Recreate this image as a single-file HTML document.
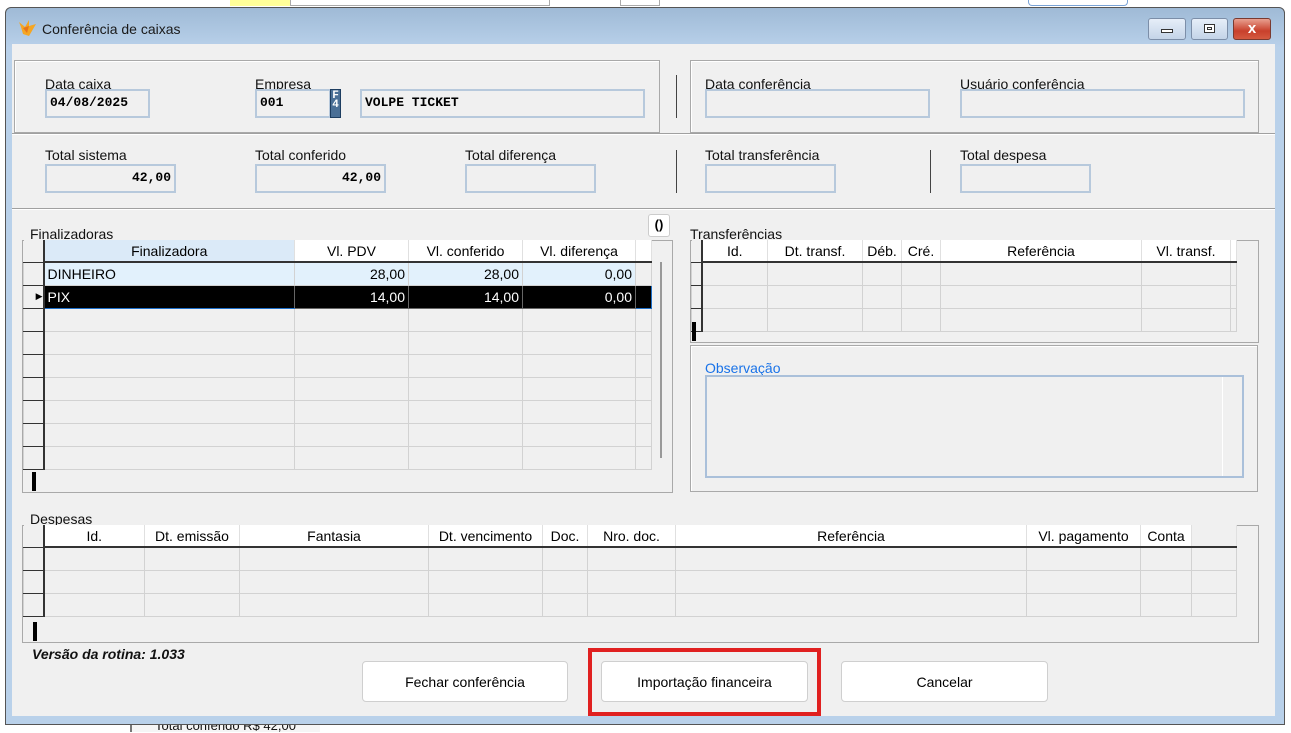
<!DOCTYPE html>
<html><head><meta charset="utf-8">
<style>
*{box-sizing:border-box;margin:0;padding:0}
body{width:1291px;height:732px;overflow:hidden;background:#fff;font-family:"Liberation Sans",sans-serif;font-size:14px;color:#000;position:relative}
.a{position:absolute}
.lbl{position:absolute;font-size:14px;color:#111;white-space:nowrap}
.inp{position:absolute;background:#f0f0f0;border:2px solid #b7c9dc;font-family:"Liberation Mono",monospace;font-weight:bold;font-size:13px;padding:2px 3px;line-height:20px}
.grp{position:absolute;border:1px solid #a9a9a9;box-shadow:inset 1px 1px 0 #fff}
.hl{position:absolute;height:2px;background:#a0a0a0;border-bottom:1px solid #fff}
.vl{position:absolute;width:2px;background:#555}
table{border-collapse:collapse;table-layout:fixed;position:absolute}
td{border:1px solid #d2d2d2;height:23px;padding:0 3px;font-size:14px;white-space:nowrap;overflow:hidden}
th{font-weight:normal;background:#fff;height:22px;border-right:1px solid #e0e0e0;border-bottom:2px solid #333;font-size:14px;white-space:nowrap;overflow:hidden}
td.ind,th.ind{background:#f0f0f0;border-right:2px solid #333;border-bottom:1px solid #333;padding:0}
.r{text-align:right}
.btn{position:absolute;background:#fff;border:1px solid #cfcfcf;border-radius:4px;text-align:center;line-height:40px;font-size:14px}
</style></head><body>
<div class="a" style="left:230px;top:0;width:60px;height:6px;background:#ffff99"></div>
<div class="a" style="left:290px;top:0;width:260px;height:6px;border:1px solid #aaa;border-top:0"></div>
<div class="a" style="left:620px;top:0;width:40px;height:6px;border:1px solid #aaa;border-top:0"></div>
<div class="a" style="left:1028px;top:0;width:100px;height:6px;border:1px solid #7aa3d6;border-top:0;border-radius:0 0 4px 4px"></div>
<div class="a" style="left:130px;top:722px;width:190px;height:10px;background:#f5f5f5;border-left:2px solid #777"></div>
<div class="lbl" style="left:155px;top:718px;font-size:13px">Total conferido R$ 42,00</div>
<div class="a" style="left:5px;top:7px;width:1280px;height:718px;border:1px solid #555;border-radius:6px 6px 0 0;background:linear-gradient(#9fbad6,#b9d1ea 40px,#b9d1ea)"></div>
<svg class="a" style="left:17px;top:18px" width="22" height="20" viewBox="0 0 22 20"><path d="M2 4 L8 9 L12 2 L12 8 L19 6 L12 18 L6 16 L4 9Z" fill="#f5a623"/><path d="M6 10 L12 8 L10 15Z" fill="#e8751a"/></svg>
<div class="lbl" style="left:42px;top:21px;font-size:14px;color:#1a1a1a">Conferência de caixas</div>
<div class="a" style="left:1148px;top:18px;width:38px;height:22px;border:1px solid #7c8ea8;border-radius:3px;background:linear-gradient(#e6eef8,#c4d4e8)"></div>
<div class="a" style="left:1161px;top:29px;width:12px;height:4px;border:1px solid #333;background:#fff"></div>
<div class="a" style="left:1191px;top:18px;width:37px;height:22px;border:1px solid #7c8ea8;border-radius:3px;background:linear-gradient(#e6eef8,#c4d4e8)"></div>
<div class="a" style="left:1204px;top:24px;width:11px;height:9px;border:1px solid #333;background:#fff;box-shadow:inset 0 0 0 2px #fff,inset 0 0 0 3px #333"></div>
<div class="a" style="left:1233px;top:18px;width:38px;height:22px;border:1px solid #7a3a30;border-radius:3px;background:linear-gradient(#e8a090,#c8402c 60%,#d45a40);color:#fff;font-weight:bold;text-align:center;line-height:20px;font-size:15px">x</div>
<div class="a" style="left:12px;top:44px;width:1263px;height:672px;background:#f0f0f0"></div>

<div class="grp" style="left:14px;top:60px;width:646px;height:73px"></div>
<div class="lbl" style="left:45px;top:76px">Data caixa</div>
<div class="inp" style="left:45px;top:89px;width:105px;height:29px">04/08/2025</div>
<div class="lbl" style="left:255px;top:76px">Empresa</div>
<div class="inp" style="left:255px;top:89px;width:76px;height:29px">001</div>
<div class="a" style="left:330px;top:89px;width:11px;height:29px;background:#4a6f96;border:1px solid #1d3d60;color:#fff;font-family:'Liberation Mono',monospace;font-size:11px;font-weight:bold;line-height:9px;text-align:center;padding-top:2px">F<br>4</div>
<div class="inp" style="left:360px;top:89px;width:285px;height:29px">VOLPE TICKET</div>
<div class="vl" style="left:676px;top:75px;height:43px;width:1px;background:#444"></div>
<div class="grp" style="left:690px;top:60px;width:569px;height:73px"></div>
<div class="lbl" style="left:705px;top:76px">Data conferência</div>
<div class="inp" style="left:705px;top:89px;width:225px;height:29px"></div>
<div class="lbl" style="left:960px;top:76px">Usuário conferência</div>
<div class="inp" style="left:960px;top:89px;width:285px;height:29px"></div>
<div class="hl" style="left:12px;top:133px;width:1263px"></div>

<div class="lbl" style="left:45px;top:147px">Total sistema</div>
<div class="inp r" style="left:45px;top:164px;width:131px;height:29px">42,00</div>
<div class="lbl" style="left:255px;top:147px">Total conferido</div>
<div class="inp r" style="left:255px;top:164px;width:131px;height:29px">42,00</div>
<div class="lbl" style="left:465px;top:147px">Total diferença</div>
<div class="inp" style="left:465px;top:164px;width:131px;height:29px"></div>
<div class="vl" style="left:676px;top:150px;height:43px;width:1px;background:#444"></div>
<div class="lbl" style="left:705px;top:147px">Total transferência</div>
<div class="inp" style="left:705px;top:164px;width:131px;height:29px"></div>
<div class="vl" style="left:930px;top:150px;height:43px;width:1px;background:#444"></div>
<div class="lbl" style="left:960px;top:147px">Total despesa</div>
<div class="inp" style="left:960px;top:164px;width:131px;height:29px"></div>
<div class="hl" style="left:12px;top:208px;width:1263px"></div>

<div class="lbl" style="left:30px;top:226px">Finalizadoras</div>
<div class="a" style="left:648px;top:214px;width:22px;height:23px;background:#fff;border:1px solid #ccc;border-radius:3px;text-align:center;font-weight:bold;font-size:13px;line-height:20px">()</div>
<div class="a" style="left:22px;top:240px;width:651px;height:253px;border:1px solid #a9a9a9;background:#f0f0f0"></div>
<table style="left:23px;top:240px;width:628px">
<colgroup><col style="width:20px"><col style="width:251px"><col style="width:114px"><col style="width:114px"><col style="width:113px"><col style="width:16px"></colgroup>
<tr><th class="ind"></th><th style="background:#dbeaf8">Finalizadora</th><th>Vl. PDV</th><th>Vl. conferido</th><th>Vl. diferença</th><th style="border-bottom:2px solid #333"></th></tr>
<tr style="background:#e2f1fc"><td class="ind"></td><td>DINHEIRO</td><td class="r">28,00</td><td class="r">28,00</td><td class="r">0,00</td><td style="background:#f0f0f0"></td></tr>
<tr style="background:#000;color:#fff"><td class="ind" style="font-size:9px;color:#000;text-align:right">▶</td><td style="border:1px solid #1e6fc8;border-right:1px solid #666">PIX</td><td class="r" style="border-color:#666">14,00</td><td class="r" style="border-color:#666">14,00</td><td class="r" style="border-color:#666">0,00</td><td style="border-color:#1e6fc8"></td></tr>
<tr><td class="ind"></td><td></td><td></td><td></td><td></td><td></td></tr>
<tr><td class="ind"></td><td></td><td></td><td></td><td></td><td></td></tr>
<tr><td class="ind"></td><td></td><td></td><td></td><td></td><td></td></tr>
<tr><td class="ind"></td><td></td><td></td><td></td><td></td><td></td></tr>
<tr><td class="ind"></td><td></td><td></td><td></td><td></td><td></td></tr>
<tr><td class="ind"></td><td></td><td></td><td></td><td></td><td></td></tr>
<tr><td class="ind" style="height:6px"></td><td style="height:6px"></td><td></td><td></td><td></td><td></td></tr>
</table>
<div class="a" style="left:660px;top:262px;width:2px;height:196px;background:#999"></div>
<div class="a" style="left:32px;top:472px;width:4px;height:19px;background:#000"></div>

<div class="lbl" style="left:690px;top:226px">Transferências</div>
<div class="a" style="left:690px;top:240px;width:569px;height:103px;border:1px solid #a9a9a9;background:#f0f0f0"></div>
<table style="left:691px;top:240px;width:545px">
<colgroup><col style="width:10px"><col style="width:66px"><col style="width:95px"><col style="width:39px"><col style="width:39px"><col style="width:201px"><col style="width:89px"><col style="width:6px"></colgroup>
<tr><th class="ind"></th><th>Id.</th><th>Dt. transf.</th><th>Déb.</th><th>Cré.</th><th>Referência</th><th>Vl. transf.</th><th></th></tr>
<tr><td class="ind"></td><td></td><td></td><td></td><td></td><td></td><td></td><td></td></tr>
<tr><td class="ind"></td><td></td><td></td><td></td><td></td><td></td><td></td><td></td></tr>
<tr><td class="ind" style="height:14px"></td><td style="height:14px"></td><td></td><td></td><td></td><td></td><td></td><td></td></tr>
</table>
<div class="a" style="left:692px;top:322px;width:4px;height:19px;background:#000"></div>

<div class="grp" style="left:690px;top:345px;width:568px;height:147px"></div>
<div class="lbl" style="left:705px;top:361px;color:#1a73e8;border-bottom:1px solid #1a73e8;line-height:15px">Observação</div>
<div class="a" style="left:705px;top:375px;width:539px;height:103px;border:2px solid #aac0da;background:#f0f0f0"></div>
<div class="a" style="left:1222px;top:377px;width:1px;height:99px;background:#fff"></div>

<div class="lbl" style="left:30px;top:511px">Despesas</div>
<div class="a" style="left:22px;top:525px;width:1237px;height:118px;border:1px solid #a9a9a9;background:#f0f0f0"></div>
<table style="left:23px;top:525px;width:1213px">
<colgroup><col style="width:20px"><col style="width:101px"><col style="width:95px"><col style="width:189px"><col style="width:114px"><col style="width:45px"><col style="width:88px"><col style="width:351px"><col style="width:114px"><col style="width:51px"><col style="width:45px"></colgroup>
<tr><th class="ind"></th><th>Id.</th><th>Dt. emissão</th><th>Fantasia</th><th>Dt. vencimento</th><th>Doc.</th><th>Nro. doc.</th><th>Referência</th><th>Vl. pagamento</th><th>Conta</th><th style="background:#f0f0f0"></th></tr>
<tr><td class="ind"></td><td></td><td></td><td></td><td></td><td></td><td></td><td></td><td></td><td></td><td></td></tr>
<tr><td class="ind"></td><td></td><td></td><td></td><td></td><td></td><td></td><td></td><td></td><td></td><td></td></tr>
<tr><td class="ind" style="height:7px"></td><td style="height:7px"></td><td></td><td></td><td></td><td></td><td></td><td></td><td></td><td></td><td></td></tr>
</table>
<div class="a" style="left:33px;top:622px;width:4px;height:19px;background:#000"></div>

<div class="lbl" style="left:32px;top:646px;font-weight:bold;font-style:italic">Versão da rotina: 1.033</div>

<div class="btn" style="left:362px;top:661px;width:206px;height:41px">Fechar conferência</div>
<div class="btn" style="left:601px;top:661px;width:207px;height:41px">Importação financeira</div>
<div class="a" style="left:588px;top:648px;width:233px;height:68px;border:4px solid #e02020"></div>
<div class="btn" style="left:841px;top:661px;width:207px;height:41px">Cancelar</div>
</body></html>
